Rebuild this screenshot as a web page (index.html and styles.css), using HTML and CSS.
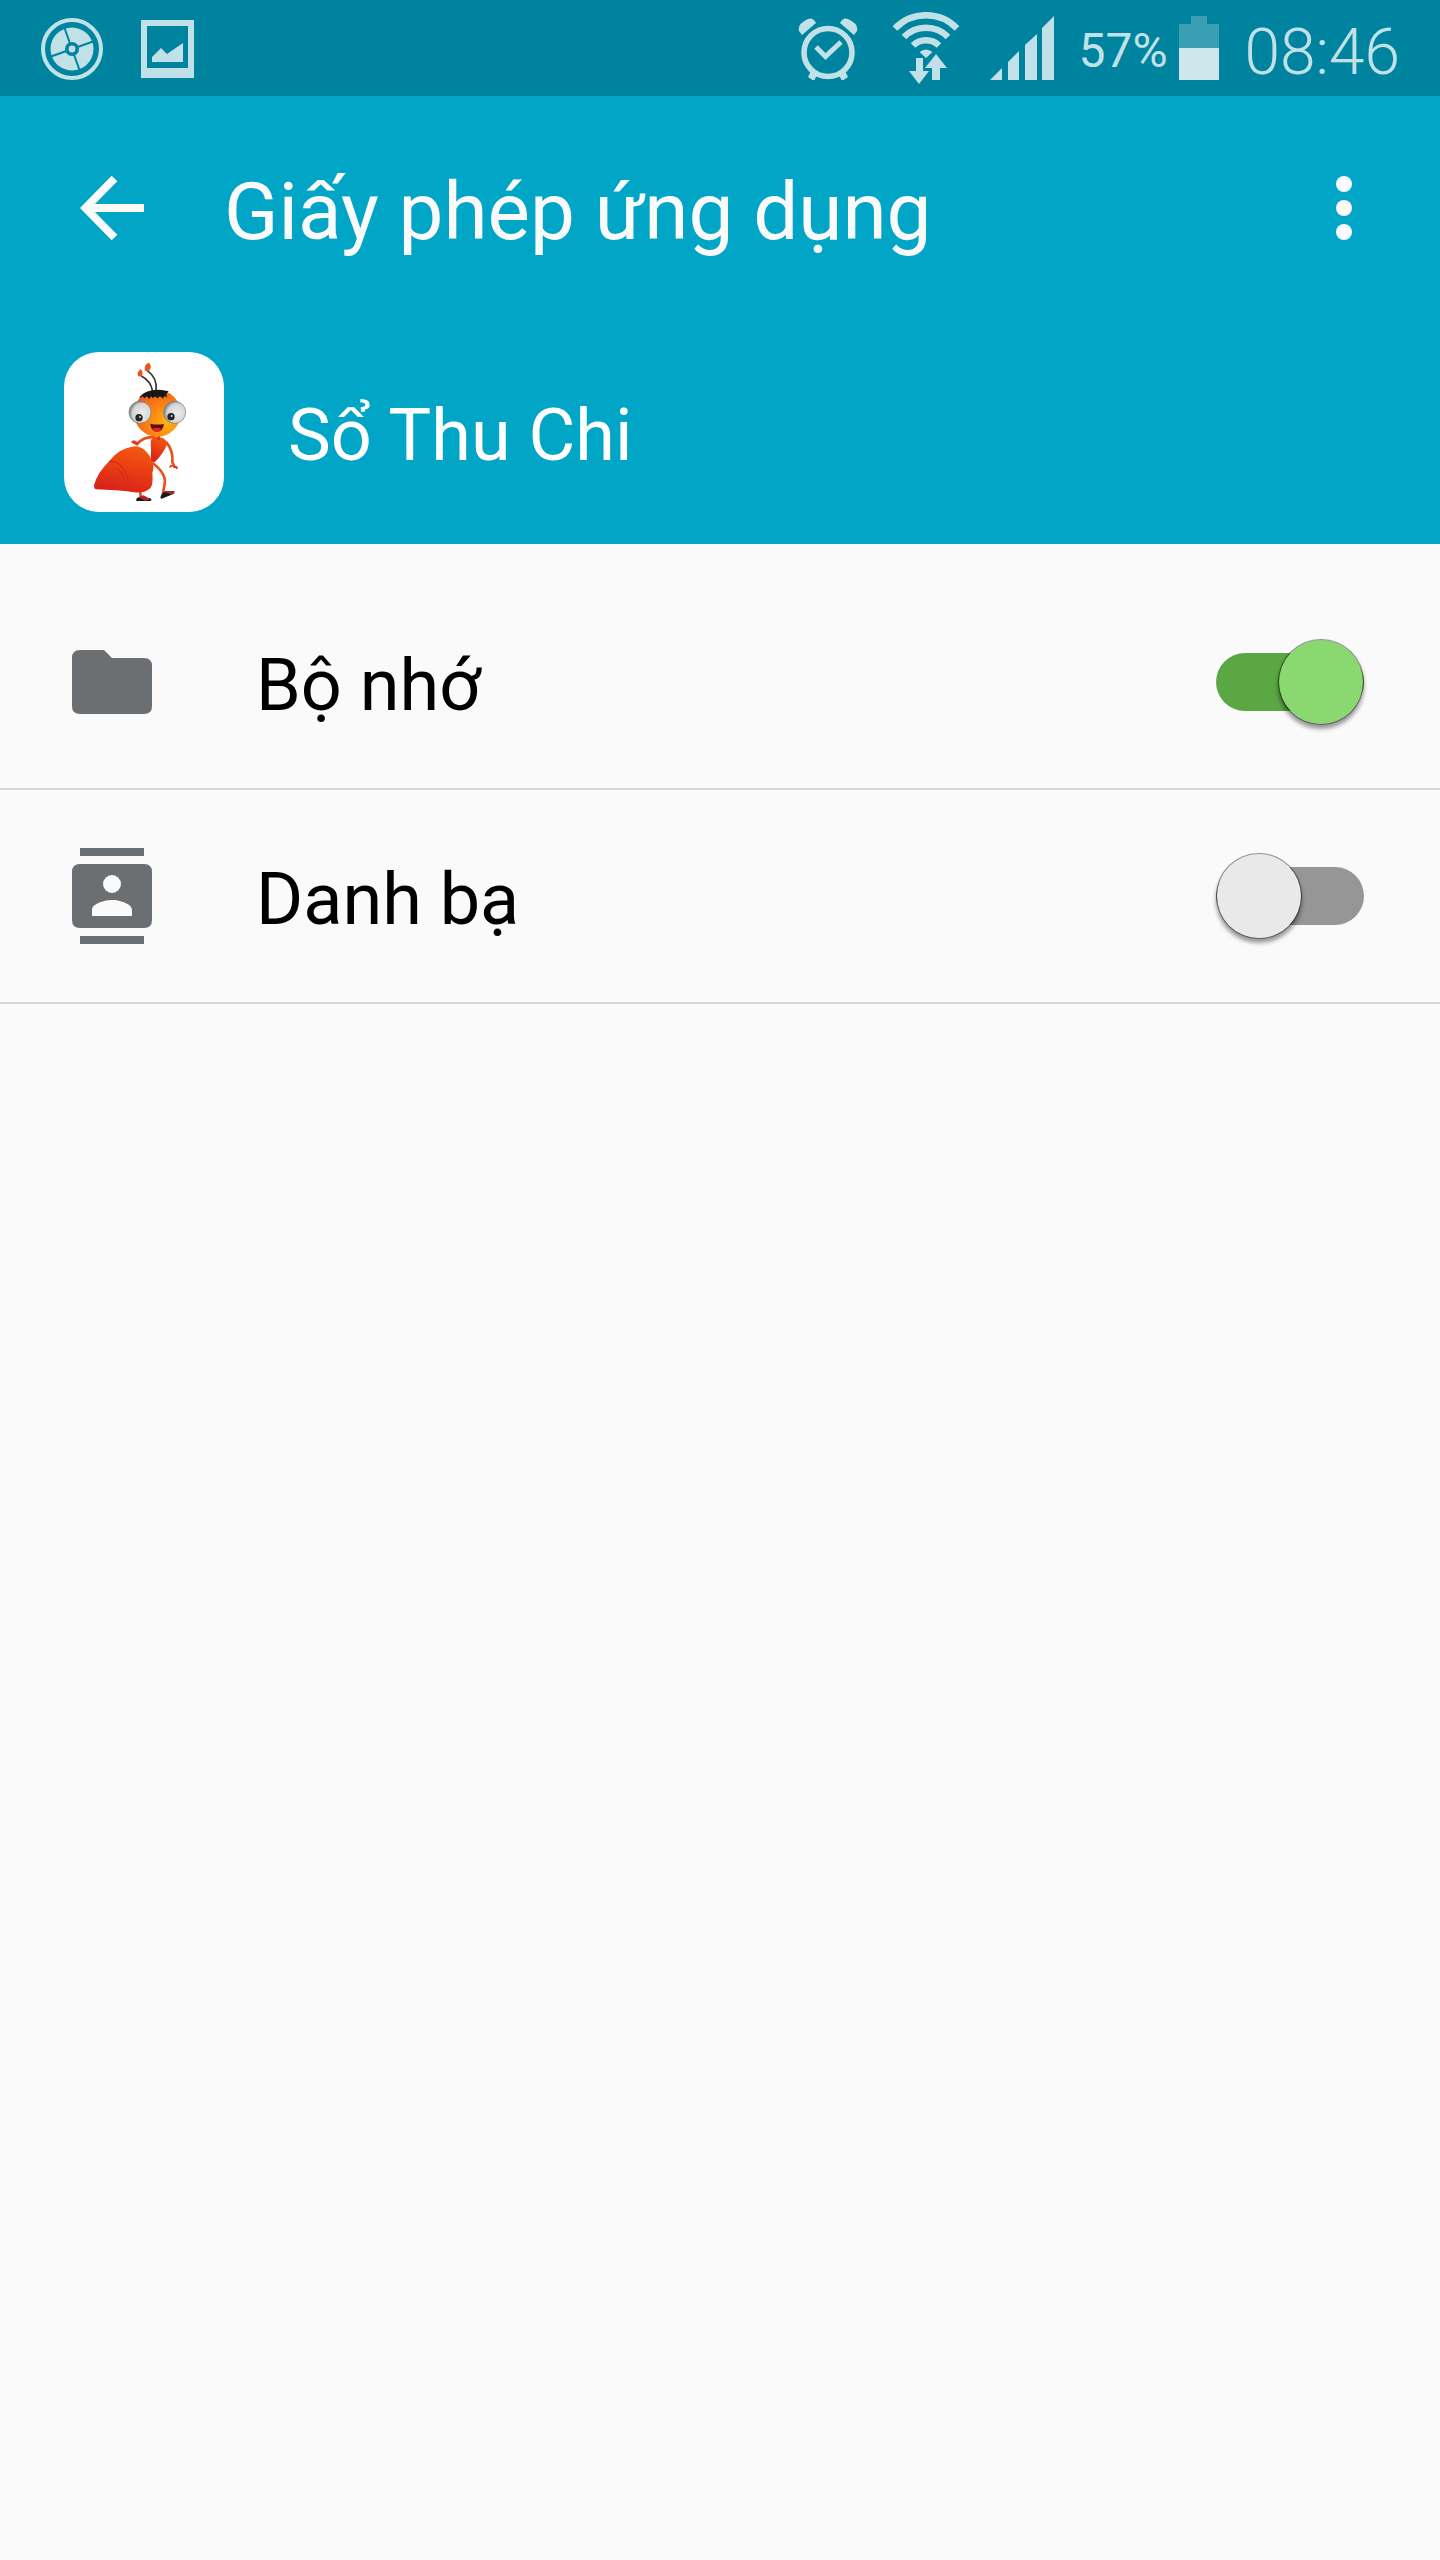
FILE: index.html
```html
<!DOCTYPE html>
<html lang="vi">
<head>
<meta charset="utf-8">
<meta name="viewport" content="width=device-width, initial-scale=1">
<title>Giấy phép ứng dụng</title>
<link rel="stylesheet" href="styles.css">
</head>
<body>
<div class="status-bar">
  <div class="status-group notifications">
    <svg class="icon" width="64" height="64" viewBox="0 0 64 64" aria-hidden="true">
      <circle cx="32" cy="33" r="29" fill="none" stroke="currentColor" stroke-width="4"/>
      <circle cx="32" cy="33" r="21.500" fill="currentColor"/>
      <path class="cut" d="M24.500 12l7.500 21 7.500 21M11 40.500l21-7.500 21-7.500" fill="none" stroke-width="2"/>
      <circle class="cut-fill" cx="32" cy="33" r="7"/>
      <circle cx="32" cy="33" r="3.400" fill="currentColor"/>
    </svg>
    <svg class="icon" width="54" height="64" viewBox="0 0 54 64" aria-hidden="true">
      <path fill="currentColor" fill-rule="evenodd" d="M0 4h53v58H0zM6 10v42h41V10z"/>
      <path fill="currentColor" d="M11 46v-5l9-9 6 6 16-11v19z"/>
    </svg>
  </div>
  <div class="status-group system">
    <svg class="icon" width="60" height="64" viewBox="0 0 60 64" aria-hidden="true">
      <circle cx="30" cy="36.500" r="24" fill="none" stroke="currentColor" stroke-width="5.600"/>
      <path d="M18 31l9.500 9.500L43 26" fill="none" stroke="currentColor" stroke-width="5"/>
      <path fill="currentColor" d="M4 19L1 15Q-1 8 10 3q5-2 8 4zM56 19l3-4q2-7-9-12-5-2-8 4zM13 55l6 4-3 6-6-4zM47 55l-6 4 3 6 6-4z"/>
    </svg>
    <svg class="icon wifi" width="68" height="72" viewBox="0 0 68 72" aria-hidden="true">
      <g fill="none" stroke="currentColor" stroke-width="6.500">
        <path d="M3 16.500a43 43 0 0 1 62 0"/>
        <path d="M12 25a31 31 0 0 1 44 0"/>
        <path d="M21 33.500a18.500 18.500 0 0 1 26 0"/>
      </g>
      <path fill="currentColor" d="M27.500 40q6.500-5 13 0L34 46zM24 46h7v13h6L27 72 17 59h7zM44 42l11 14h-7v12h-8V56h-7z"/>
    </svg>
    <svg class="icon" width="64" height="64" viewBox="0 0 64 64" aria-hidden="true">
      <path fill="currentColor" d="M0 64l12-12v12zM18 64V46l11-11v29zM35 64V29l12-11v46zM52 64V12L64 0v64z"/>
    </svg>
    <span class="battery-level">57%</span>
    <svg class="icon" width="40" height="64" viewBox="0 0 40 64" aria-hidden="true">
      <path fill="#3b9fb4" d="M0 8h12V0h16v8h12v24H0z"/>
      <path fill="#cde7ec" d="M0 32h40v32H0z"/>
    </svg>
    <time class="clock">08:46</time>
  </div>
</div>
<header class="app-header">
  <div class="toolbar">
    <button class="icon-button" type="button" aria-label="Quay lại">
      <svg width="64" height="64" viewBox="0 0 64 64" aria-hidden="true">
        <path d="M34.500 2.500L5.500 32l29 29.500M6 32h58" fill="none" stroke="currentColor" stroke-width="8"/>
      </svg>
    </button>
    <h1 class="title">Giấy phép ứng dụng</h1>
    <button class="icon-button more" type="button" aria-label="Thêm tùy chọn">
      <svg width="16" height="64" viewBox="0 0 16 64" fill="currentColor" aria-hidden="true">
        <circle cx="8" cy="8" r="8"/><circle cx="8" cy="32" r="8"/><circle cx="8" cy="56" r="8"/>
      </svg>
    </button>
  </div>
  <div class="app-info">
    <svg class="app-icon" viewBox="0 0 480 480" aria-hidden="true">
      <defs>
        <radialGradient id="head" cx="0.700" cy="0.700" r="0.750">
          <stop offset="0" stop-color="#fdb313"/><stop offset="0.500" stop-color="#fb8513"/><stop offset="1" stop-color="#f05a1a"/>
        </radialGradient>
        <linearGradient id="body" x1="0.600" y1="0" x2="0.300" y2="1">
          <stop offset="0" stop-color="#f4570f"/><stop offset="1" stop-color="#d91f1b"/>
        </linearGradient>
        <radialGradient id="eye" cx="0.600" cy="0.550" r="0.550">
          <stop offset="0" stop-color="#ececec"/><stop offset="0.800" stop-color="#d3d5d7"/><stop offset="1" stop-color="#8e9294"/>
        </radialGradient>
      </defs>
      <rect width="480" height="480" rx="104" fill="#fff"/>
      <g fill="none" stroke="#333" stroke-width="5">
        <path d="M232 72q28 14 34 46M250 56q31 22 26 60"/>
      </g>
      <path fill="#ea541e" d="M230 51q-14 12-7 21 7 4 12-2 3-10-5-19zM254 32q-15 6-11 24 13 5 17-8 2-10-6-16z"/>
      <path d="M272 256q-30-4-53 20l-13-6M308 272q20 24 17 58l6 14M262 330q46 34 40 66l-5 28M228 420l4 22" fill="none" stroke="#e9501c" stroke-width="8" stroke-linecap="round"/>
      <path fill="#df351e" d="M220 282l-8-8-9-5 8-4 12 7zM320 338l-5 8 4 1 6-4 14 9q5-3 0-9z"/>
      <path fill="url(#body)" d="M260 268q3-14 22-13 25 2 28 20-10 27-38 56l-12-5q2-32 0-58z"/>
      <path fill="#df351e" d="M280 252h8v12h-8z"/>
      <path fill="url(#body)" d="M90 400q10-38 48-75 29-37 75-42 34 2 50 43 9 17 2 37 4 39-9 48-19 15-50 9-45-6-111-8-6-3-5-12z"/>
      <path d="M135 328q38-8 60 60M160 350q18 12 20 38" fill="none" stroke="#c71b1b" stroke-width="2"/>
      <path fill="#1b191b" d="M217 442q2-8 18-7l24 4q8 7-2 8h-40zM289 438q2-16 18-21l24 1q4 7-12 12l-26 10z"/>
      <path fill="#b3222a" d="M225 434l14-4 20 12-14 4-18-8zM299 420l10-3 22 2q0 6-12 8-8-4-20-7z"/>
      <ellipse cx="280" cy="184" rx="70" ry="70" fill="url(#head)"/>
      <path fill="#171717" d="M225 140q9-20 39-25 23-5 50 3l-7 8 2 10-9-4-2 8-10-7-8 6-7-6-6 6-6-6-5 8-8-8-7 6-5-6z"/>
      <circle cx="228" cy="181" r="33" fill="url(#eye)" stroke="#777" stroke-width="2"/>
      <circle cx="332" cy="181" r="33" fill="url(#eye)" stroke="#777" stroke-width="2"/>
      <circle cx="225" cy="197" r="11" fill="#252525"/><circle cx="321" cy="194" r="11" fill="#252525"/>
      <circle cx="228" cy="195" r="3" fill="#ddd"/><circle cx="323" cy="192" r="3" fill="#ddd"/>
      <path fill="#5a1214" d="M259 215q20 5 41 1-3 23-22 23-18-2-19-24z"/>
      <path fill="#e8212b" d="M264 231q15-8 28 0-5 9-14 9-10-1-14-9z"/>
    </svg>
    <h2 class="app-name">Sổ Thu Chi</h2>
  </div>
</header>
<main class="permissions">
  <label class="permission" for="storage">
    <svg class="permission-icon" viewBox="0 0 80 96" aria-hidden="true">
      <path fill="currentColor" d="M8 16h24l8 8h32q8 0 8 8v40q0 8-8 8H8q-8 0-8-8V24q0-8 8-8z"/>
    </svg>
    <span class="permission-name">Bộ nhớ</span>
    <input class="switch" id="storage" type="checkbox" role="switch" checked>
  </label>
  <label class="permission" for="contacts">
    <svg class="permission-icon" viewBox="0 0 80 96" aria-hidden="true">
      <path fill="currentColor" fill-rule="evenodd" d="M8 0h64v8H8zM8 88h64v8H8zM8 16h64q8 0 8 8v48q0 8-8 8H8q-8 0-8-8V24q0-8 8-8zM40 27a9 9 0 1 0 0 18a9 9 0 1 0 0-18zM20 68h40v-6c0-6.700-13.300-10-20-10s-20 3.300-20 10z"/>
    </svg>
    <span class="permission-name">Danh bạ</span>
    <input class="switch" id="contacts" type="checkbox" role="switch">
  </label>
</main>
</body>
</html>
```
FILE: styles.css
```css
* {
  box-sizing: border-box;
}

body {
  margin: 0;
  min-height: 100vh;
  background: #fafafa;
  color: #000;
  font-family: Roboto, "Noto Sans", sans-serif;
}

svg {
  display: block;
  flex: none;
}

/* Status bar */
.status-bar {
  display: flex;
  align-items: center;
  justify-content: space-between;
  height: 96px;
  padding: 0 40px;
  background: #00839e;
  color: #bfe1e7;
}

.status-group {
  display: flex;
  align-items: center;
}

.notifications {
  gap: 37px;
}

.cut {
  stroke: #00839e;
}

.cut-fill {
  fill: #00839e;
}

.wifi {
  margin: 0 30px 0 34px;
}

.battery-level {
  margin: 6px 11px 0 24px;
  font-size: 48px;
  font-weight: 400;
  line-height: 56px;
}

.clock {
  margin: 10px 0 0 26px;
  font-size: 64px;
  font-weight: 350;
  line-height: 72px;
}

/* Header */
.app-header {
  background: #01a5c6;
  color: #fafafa;
}

.toolbar {
  display: flex;
  align-items: center;
  height: 224px;
  padding: 0 80px;
}

.icon-button {
  padding: 0;
  border: 0;
  background: none;
  color: inherit;
  cursor: pointer;
}

.title {
  flex: 1;
  margin: 0;
  padding: 8px 0 0 80px;
  font-size: 80px;
  font-weight: 400;
  line-height: 96px;
}

.more {
  padding: 0 8px;
}

.app-info {
  display: flex;
  align-items: center;
  gap: 64px;
  padding: 32px 64px;
}

.app-icon {
  width: 160px;
  height: 160px;
}

.app-name {
  margin: 0;
  padding-top: 8px;
  color: #fff;
  font-size: 72px;
  font-weight: 400;
  line-height: 88px;
}

/* Permission list */
.permissions {
  padding-top: 32px;
}

.permission {
  display: flex;
  align-items: center;
  height: 214px;
  padding: 0 76px 0 72px;
  border-bottom: 2px solid #d9d9d9;
  cursor: pointer;
}

.permission-icon {
  width: 80px;
  height: 96px;
  color: #6b6f72;
}

.permission-name {
  flex: 1;
  padding: 8px 0 0 104px;
  font-size: 72px;
  line-height: 88px;
}

.switch {
  appearance: none;
  display: flex;
  align-items: center;
  width: 148px;
  height: 58px;
  margin: 0;
  border-radius: 29px;
  background: #969696;
  cursor: pointer;
}

.switch::before {
  content: "";
  flex: none;
  width: 84px;
  height: 84px;
  border: 1px solid rgba(0, 0, 0, 0.4);
  border-radius: 50%;
  background: #e9e9e9;
  background-clip: padding-box;
  box-shadow: 0 4px 4px rgba(0, 0, 0, 0.4);
}

.switch:checked {
  justify-content: flex-end;
  background: #5aa744;
}

.switch:checked::before {
  background-color: #8ad870;
}
```
